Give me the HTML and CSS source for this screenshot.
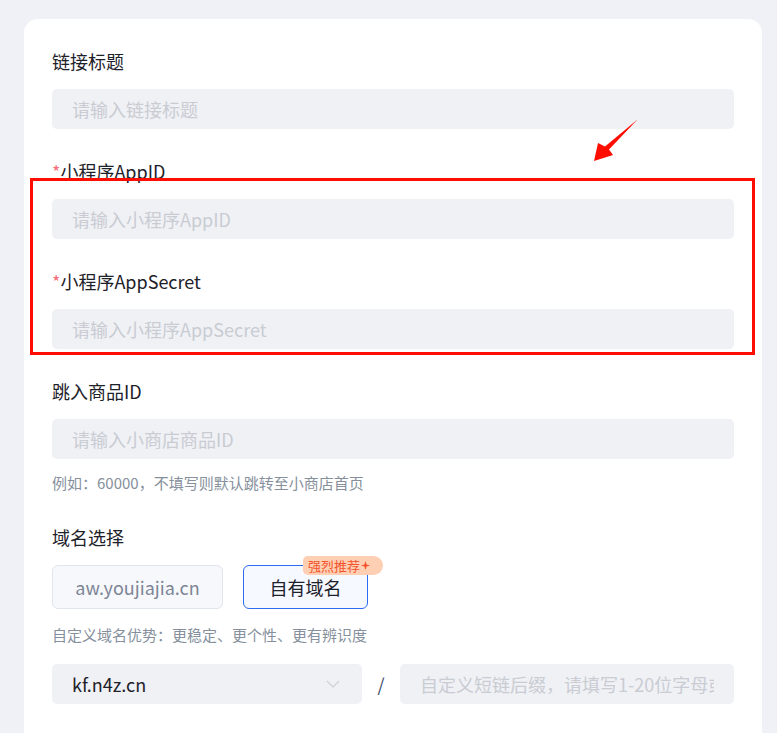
FILE: index.html
```html
<!DOCTYPE html>
<html lang="zh-CN">
<head>
<meta charset="utf-8">
<title>小程序链接</title>
<link rel="stylesheet" href="styles.css">
</head>
<body>
<div class="page">
  <div class="card">
    <div class="field">
      <div class="label">链接标题</div>
      <input class="input" type="text" placeholder="请输入链接标题">
    </div>
    <div class="field">
      <div class="label"><span class="req">*</span>小程序AppID</div>
      <input class="input" type="text" placeholder="请输入小程序AppID">
    </div>
    <div class="field">
      <div class="label"><span class="req">*</span>小程序AppSecret</div>
      <input class="input" type="text" placeholder="请输入小程序AppSecret">
    </div>
    <div class="field">
      <div class="label">跳入商品ID</div>
      <input class="input" type="text" placeholder="请输入小商店商品ID">
      <div class="hint">例如：60000，不填写则默认跳转至小商店首页</div>
    </div>
    <div class="field">
      <div class="label">域名选择</div>
      <div class="domains">
        <div class="domain">aw.youjiajia.cn</div>
        <div class="domain active">自有域名<span class="badge">强烈推荐<svg class="spark" viewBox="0 0 10 10" width="9" height="9"><path d="M5 0 L6.2 3.8 L10 5 L6.2 6.2 L5 10 L3.8 6.2 L0 5 L3.8 3.8 Z" fill="#f2542d"/></svg></span></div>
      </div>
      <div class="hint">自定义域名优势：更稳定、更个性、更有辨识度</div>
      <div class="linkrow">
        <div class="select">
          <span>kf.n4z.cn</span>
          <svg class="chev" viewBox="0 0 14 8" width="14" height="8"><path d="M1 1 L7 7 L13 1" fill="none" stroke="#cfd3da" stroke-width="1.4"/></svg>
        </div>
        <div class="slash">/</div>
        <input class="input" type="text" placeholder="自定义短链后缀，请填写1-20位字母或数字">
      </div>
    </div>
  </div>
</div>
<div class="mark-box"></div>
<svg class="mark-arrow" viewBox="590 115 52 50" width="52" height="50">
  <polygon points="637.5,119.5 609,149.5 613,155 594,161 598,143 605,146.5" fill="#ff0d00"/>
</svg>
</body>
</html>
```
FILE: styles.css
```css
* { box-sizing: border-box; }
html, body { margin: 0; padding: 0; }
body {
  background: #f0f1f6;
  font-family: "Noto Sans CJK SC", "Noto Sans", sans-serif;
  color: #1d2129;
  overflow: hidden;
}
.page {
  padding: 19px 15px 0 24px;
}
.card {
  width: 738px;
  background: #ffffff;
  border-radius: 14px 14px 0 0;
  padding: 31px 28px 60px;
  display: flex;
  flex-direction: column;
  gap: 31px;
}
.field {
  display: flex;
  flex-direction: column;
}
.label {
  font-size: 18px;
  line-height: 22px;
  height: 24px;
  margin-bottom: 15px;
  color: #1d2129;
}
.req { color: #f56c7a; }
.input {
  display: block;
  width: 100%;
  height: 40px;
  border: none;
  outline: none;
  border-radius: 5px;
  background: #f0f1f5;
  padding: 0 20px;
  font-family: inherit;
  font-size: 18px;
  color: #1d2129;
}
.input::placeholder { color: #c9ccd3; }
.hint {
  font-size: 15px;
  line-height: 20px;
  height: 22px;
  color: #86909c;
  margin-top: 14px;
}
.domains {
  display: flex;
  gap: 20px;
  margin-bottom: 2px;
}
.domain {
  position: relative;
  height: 44px;
  padding: 0 24px;
  border: 1px solid #e1e5ee;
  background: #f7f8fc;
  border-radius: 6px;
  display: flex;
  align-items: center;
  justify-content: center;
  font-size: 18px;
  color: #7d8596;
  width: 171px;
}
.domain.active {
  width: 125px;
  border-color: #2d6cf0;
  background: #f6f9ff;
  color: #1d2129;
}
.badge {
  position: absolute;
  top: -10px;
  left: 59px;
  width: 80px;
  height: 19px;
  background: #ffcfb3;
  border-radius: 5px 10px 10px 5px;
  color: #f2542d;
  font-size: 13px;
  line-height: 17px;
  padding-left: 5px;
  display: flex;
  align-items: center;
  white-space: nowrap;
}
.spark { margin-left: 1px; }
.linkrow {
  display: grid;
  grid-template-columns: 310px 38px 1fr;
  margin-top: 17px;
}
.select {
  height: 40px;
  border-radius: 5px;
  background: #f0f1f5;
  padding: 0 22px 0 20px;
  display: flex;
  align-items: center;
  justify-content: space-between;
  font-size: 18px;
  color: #1d2129;
}
.slash {
  display: flex;
  align-items: center;
  justify-content: center;
  font-size: 18px;
  color: #3b4a6a;
}
.mark-box {
  position: absolute;
  left: 30px;
  top: 178px;
  width: 725px;
  height: 177px;
  border: 3px solid #ff0d00;
}
.mark-arrow {
  position: absolute;
  left: 590px;
  top: 115px;
}
```
